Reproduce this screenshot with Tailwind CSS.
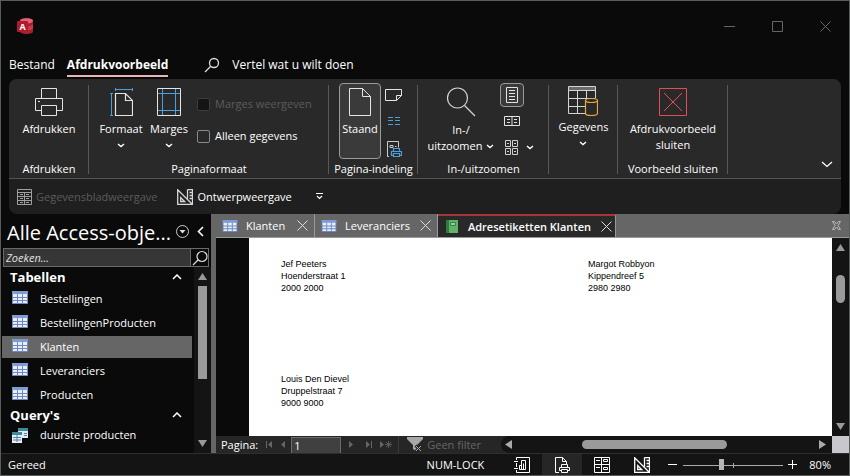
<!DOCTYPE html>
<html lang="nl">
<head>
  <meta charset="UTF-8">
  <meta name="viewport" content="width=device-width, initial-scale=1.0">
  <title>Afdrukvoorbeeld - Access</title>
  <script src="https://cdn.jsdelivr.net/npm/@tailwindcss/browser@4"></script>
</head>
<body class="h-screen overflow-hidden flex flex-col border border-[#5a5c5b] bg-[#0a0a0a] text-white text-[11px] leading-4 font-['Open_Sans','Noto_Sans',sans-serif]">

  <!-- Shared icons -->
  <svg class="hidden">
    <symbol id="icon-table" viewBox="0 0 16 13">
      <rect width="16" height="13" fill="#6f88bd"/>
      <rect width="16" height="3" fill="#7f9bd6"/>
      <path fill="#e6eefc" d="M1 3h4v3H1zM6 3h4v3H6zM11 3h4v3h-4zM1 7h4v2H1zM6 7h4v2H6zM11 7h4v2h-4zM1 10h4v2H1zM6 10h4v2H6zM11 10h4v2h-4z"/>
    </symbol>
    <symbol id="icon-close" viewBox="0 0 11 11">
      <path d="M.5.5l10 10M10.5.5l-10 10" stroke="currentColor" fill="none"/>
    </symbol>
    <symbol id="icon-chevron" viewBox="0 0 8 5">
      <path d="M1 1l3 2.500L7 1" stroke="currentColor" stroke-width="1.4" fill="none"/>
    </symbol>
    <symbol id="icon-design" viewBox="0 0 16 16">
      <path d="M.7.8v14.500h14.600zM3.700 8.500v4h4zM10.500.5h5v15M10.500.5v9M12.500 3.500h3M12.500 6.500h3M12.500 9.500h3" stroke="currentColor" stroke-width="1.3" fill="none"/>
    </symbol>
  </svg>

  <!-- Title bar -->
  <header class="h-[50px] shrink-0 flex items-center justify-between pl-4">
    <svg class="size-4" viewBox="0 0 16 16">
      <path d="M3 2.500C3 1 6 0 9.500 0S16 1 16 2.500v11c0 1.500-3 2.500-6.500 2.500S3 15 3 13.500z" fill="#a8202f"/>
      <ellipse cx="9.500" cy="2.800" rx="6.500" ry="2.600" fill="#e4637a"/>
      <path d="M3 6.500c3 2.500 10 2.500 13 0v4c-3 2.500-10 2.500-13 0z" fill="#c83a4c"/>
      <rect y="3" width="11" height="11" rx="1" fill="#b01a2c"/>
      <text x="5.500" y="12" font-size="9" font-weight="700" text-anchor="middle" fill="#fff">A</text>
    </svg>
    <div class="flex text-[#666]">
      <button aria-label="Minimaliseren" class="w-12 h-8 grid place-items-center"><svg class="size-[11px]" viewBox="0 0 11 11"><path d="M0 5.500h11" stroke="currentColor"/></svg></button>
      <button aria-label="Maximaliseren" class="w-12 h-8 grid place-items-center"><svg class="size-[11px]" viewBox="0 0 11 11"><path d="M.5.5h10v10H.5z" stroke="currentColor" fill="none"/></svg></button>
      <button aria-label="Sluiten" class="w-12 h-8 grid place-items-center"><svg class="size-[11px]"><use href="#icon-close"/></svg></button>
    </div>
  </header>

  <!-- Ribbon tabs -->
  <nav class="h-7 shrink-0 flex items-center pl-2 gap-3 text-[12px]">
    <a href="#" class="h-6 pt-1">Bestand</a>
    <a href="#" class="h-6 pt-1 border-b-2 border-[#e8b4ba] font-bold">Afdrukvoorbeeld</a>
    <button class="ml-6 flex items-center gap-3">
      <svg class="size-4" viewBox="0 0 16 16"><path d="M1 15l5.500-5.500M5.500 6a4.500 4.500 0 1 0 9 0a4.500 4.500 0 1 0-9 0z" stroke="#ddd" stroke-width="1.300" fill="none"/></svg>
      Vertel wat u wilt doen
    </button>
  </nav>

  <!-- Ribbon -->
  <section class="mx-2 shrink-0 rounded-lg overflow-hidden bg-[#1f1f1f]">
    <div class="h-[100px] flex bg-[#292929] border-b border-[#555]">

      <div class="w-20 flex flex-col items-center pt-[9px] relative after:absolute after:right-0 after:top-1.5 after:bottom-1 after:w-px after:bg-[#575757]">
        <button class="flex flex-col items-center">
          <svg class="size-7 mb-[5px]" viewBox="0 0 28 28" fill="none" stroke="#e4e4e4"><path d="M6.500 10V.5h15V10M6.500 22.500h-6v-12h27v12h-6M6.500 17.500h15v10h-15z"/><path d="M3 13.500h2"/></svg>
          Afdrukken
        </button>
        <span class="mt-auto mb-px">Afdrukken</span>
      </div>

      <div class="w-60 flex flex-col items-center pt-[9px] relative after:absolute after:right-0 after:top-1.5 after:bottom-1 after:w-px after:bg-[#575757]">
        <div class="w-full flex pl-2">
          <button class="w-12 flex flex-col items-center">
            <svg class="w-6 h-7 mb-[5px]" viewBox="0 0 24 28" fill="none"><path d="M7 1.500h16M6.500 0v3M23.500 0v3M2.500 6v21M1 5.500h3M1 27.500h3" stroke="#4ba0dc"/><path d="M6.500 5.500h10l7 7v15h-17zM16.500 5.500v7h7" stroke="#e4e4e4" stroke-width="1.200"/></svg>
            Formaat
            <svg class="w-2 h-[5px] mt-1.5"><use href="#icon-chevron"/></svg>
          </button>
          <button class="w-12 flex flex-col items-center">
            <svg class="w-6 h-7 mb-[5px]" viewBox="0 0 24 28" fill="none"><path d="M.5.5h23v27H.5z" stroke="#e4e4e4"/><path d="M5.500 1v26M18.500 1v26M1 5.500h22M1 22.500h22" stroke="#4ba0dc"/></svg>
            Marges
            <svg class="w-2 h-[5px] mt-1.5"><use href="#icon-chevron"/></svg>
          </button>
          <div class="ml-1 mt-2 flex flex-col gap-4">
            <label class="flex items-center gap-[5px] text-[#5c5c5c]"><input type="checkbox" disabled class="appearance-none size-[13px] rounded-xs border border-[#3d3d3d] bg-[#141414]">Marges weergeven</label>
            <label class="flex items-center gap-[5px]"><input type="checkbox" class="appearance-none size-[13px] rounded-xs border border-[#8a8a8a]">Alleen gegevens</label>
          </div>
        </div>
        <span class="mt-auto mb-px">Paginaformaat</span>
      </div>

      <div class="w-[89px] flex flex-col items-center pt-1 relative after:absolute after:right-0 after:top-1.5 after:bottom-1 after:w-px after:bg-[#575757]">
        <div class="w-full flex pl-2.5 gap-1">
          <button class="w-[42px] h-[76px] flex flex-col items-center pt-1 rounded border border-[#9a9a9a] bg-[#3a3a3a]">
            <svg class="w-[22px] h-7 mb-[5px]" viewBox="0 0 22 28" fill="none" stroke="#e4e4e4"><path d="M.5.5h13l8 8v19H.5zM13.500.500v8h8"/></svg>
            Staand
          </button>
          <div class="flex flex-col items-center gap-3 pt-1.5">
            <button aria-label="Liggend"><svg class="w-[17px] h-3" viewBox="0 0 17 12" fill="none" stroke="#e4e4e4"><path d="M.5.5h16v6l-5 5H.5zM11.500 11.500v-5h5"/></svg></button>
            <button aria-label="Kolommen" class="py-1"><svg class="w-3 h-2" viewBox="0 0 12 8"><path d="M0 .5h5M7 .5h5M0 3.500h5M7 3.500h5M0 7.500h5M7 7.500h5" stroke="#4ba0dc"/></svg></button>
            <button aria-label="Pagina-instelling"><svg class="size-4" viewBox="0 0 16 16" fill="none"><path d="M3 15.500H1.500V.500h11v6M4 4.500h3v2H4zM9 5.500h1.500" stroke="#ccc"/><path d="M7.500 10V7.500h6V10M7.500 14.500h-2v-4h10v4h-2M7.500 12.500h6v3h-6z" stroke="#4ba0dc" stroke-width="1.200"/></svg></button>
          </div>
        </div>
        <span class="mt-auto mb-px">Pagina-indeling</span>
      </div>

      <div class="w-[131px] flex flex-col items-center pt-1 relative after:absolute after:right-0 after:top-1.5 after:bottom-1 after:w-px after:bg-[#575757]">
        <div class="w-full flex pl-2 gap-1">
          <button class="w-[70px] flex flex-col items-center pt-1">
            <svg class="size-[30px] mb-[5px]" viewBox="0 0 30 30" fill="none" stroke="#d4d4d4" stroke-width="1.200"><circle cx="11.500" cy="11" r="10"/><path d="M18.500 18.500L29 29"/></svg>
            In-/
            <span class="flex items-center gap-1">uitzoomen <svg class="w-2 h-[5px]"><use href="#icon-chevron"/></svg></span>
          </button>
          <div class="flex flex-col items-start gap-1">
            <button aria-label="Eén pagina" class="w-6 h-6 grid place-items-center rounded border border-[#9a9a9a] bg-[#3a3a3a]"><svg class="w-3 h-4" viewBox="0 0 12 16" fill="none" stroke="#e4e4e4"><path d="M.5.5h11v15H.5zM3 3.500h6M3 6.500h6M3 9.500h6M3 12.500h6"/></svg></button>
            <button aria-label="Twee pagina's" class="w-6 h-5 grid place-items-center"><svg class="w-4 h-2.5" viewBox="0 0 16 10" fill="none" stroke="#e4e4e4"><path d="M.5.5h15v9H.5zM8 .5v9M3 3.500h3M3 6.500h3M10 3.500h3M10 6.500h3"/></svg></button>
            <button aria-label="Meer pagina's" class="h-6 pl-[5px] flex items-center gap-2"><svg class="w-[13px] h-[15px]" viewBox="0 0 13 15" fill="none" stroke="#cfcfcf"><path d="M.5.5h5v6h-5zM7.500.500h5v6h-5zM.5 8.500h5v6h-5zM7.500 8.500h5v6h-5zM2 3.500h2M9 3.500h2M2 11.500h2M9 11.500h2"/></svg><svg class="w-2 h-[5px]"><use href="#icon-chevron"/></svg></button>
          </div>
        </div>
        <span class="mt-auto mb-px">In-/uitzoomen</span>
      </div>

      <div class="w-[69px] flex flex-col items-center pt-[7px] relative after:absolute after:right-0 after:top-1.5 after:bottom-1 after:w-px after:bg-[#575757]">
        <button class="flex flex-col items-center">
          <svg class="w-[30px] h-[30px] mb-[3px]" viewBox="0 0 30 30" fill="none"><path d="M1 1h27v4H1z" fill="#6a6a6a"/><path d="M17 27.500H.5V.5h27V12M.5 4.500h27M.5 12.500h27M.5 20.500H17M9.500 5v22M18.500 5v8" stroke="#d4d4d4"/><path d="M17.500 14.500v13c0 1 2.500 2 6 2s6-1 6-2v-13" fill="#292929" stroke="#e9a93c" stroke-width="1.200"/><ellipse cx="23.500" cy="14.500" rx="6" ry="2" fill="#292929" stroke="#e9a93c" stroke-width="1.200"/></svg>
          Gegevens
          <svg class="w-2 h-[5px] mt-1.5"><use href="#icon-chevron"/></svg>
        </button>
      </div>

      <div class="w-[110px] flex flex-col items-center pt-[9px] relative after:absolute after:right-0 after:top-1.5 after:bottom-1 after:w-px after:bg-[#575757]">
        <button class="flex flex-col items-center">
          <svg class="size-7 mb-[5px]" viewBox="0 0 28 28" fill="none" stroke="#e04f55"><path d="M.5.5h27v27H.5zM5 5l18 18M23 5L5 23"/></svg>
          Afdrukvoorbeeld<br>sluiten
        </button>
        <span class="mt-auto mb-px">Voorbeeld sluiten</span>
      </div>

      <button aria-label="Lint samenvouwen" class="ml-auto mt-auto mb-2.5 mr-2"><svg class="w-3 h-[7px]" viewBox="0 0 12 7"><path d="M1 1l5 4.500L11 1" stroke="#fff" stroke-width="1.300" fill="none"/></svg></button>
    </div>

    <!-- Quick access toolbar -->
    <div class="h-[35px] flex items-center pl-2 gap-5">
      <button disabled class="flex items-center gap-1 text-[#5c5c5c]">
        <svg class="w-[15px] h-4" viewBox="0 0 15 16" fill="none" stroke="#a0a0a0"><path d="M.5.5h14v15H.5zM1 3.500h13M1 7.500h13M1 11.500h13M7.500 3.500v12M3 5.500h3M9 5.500h3M3 9.500h3M9 9.500h3M3 13.500h3M9 13.500h3"/></svg>
        Gegevensbladweergave
      </button>
      <button class="flex items-center gap-1">
        <svg class="size-4 text-[#d8d8d8]"><use href="#icon-design"/></svg>
        Ontwerpweergave
      </button>
      <button aria-label="Werkbalk aanpassen" class="ml-1"><svg class="w-[7px] h-[7px]" viewBox="0 0 7 7"><path d="M0 .5h7M1 3l2.500 2.500L6 3" stroke="#fff" stroke-width="1.200" fill="none"/></svg></button>
    </div>
  </section>

  <main class="flex-1 min-h-0 flex">

    <!-- Navigation pane -->
    <aside class="w-[210px] shrink-0 flex flex-col">
      <div class="h-[34px] shrink-0 flex items-center pl-1.5 pr-[7px]">
        <h1 class="pt-1 text-[20px] leading-7 whitespace-nowrap">Alle Access-obje...</h1>
        <button aria-label="Menu" class="ml-auto"><svg class="size-[13px]" viewBox="0 0 13 13"><circle cx="6.500" cy="6.500" r="6" stroke="#ccc" fill="none"/><path d="M3.500 5h6l-3 3.500z" fill="#ddd"/></svg></button>
        <button aria-label="Deelvenster sluiten" class="ml-2"><svg class="w-[7px] h-[11px]" viewBox="0 0 7 11"><path d="M6 1L1.500 5.500L6 10" stroke="#fff" stroke-width="1.600" fill="none"/></svg></button>
      </div>
      <div class="h-[19px] shrink-0 ml-0.5 mr-[2px] flex border border-[#6a6a6a]">
        <input type="text" aria-label="Zoeken" placeholder="Zoeken..." class="flex-1 min-w-0 pl-0.5 bg-[#363636] text-[11px] italic placeholder:text-[#e0e0e0] outline-none">
        <button aria-label="Zoeken" class="w-[18px] border-l border-[#6a6a6a] grid place-items-center"><svg class="size-4" viewBox="0 0 16 16"><path d="M1 15l5-5M5 6.500a5 5 0 1 0 10 0a5 5 0 1 0-10 0z" stroke="#ddd" stroke-width="1.200" fill="none"/></svg></button>
      </div>
      <div class="flex-1 min-h-0 flex overflow-hidden">
        <div class="flex-1 pl-px">
          <h2 class="h-5 flex items-center justify-between pl-2 pr-2.5 text-[13px] font-bold">Tabellen <svg class="w-2.5 h-1.5" viewBox="0 0 10 6"><path d="M1 5l4-4l4 4" stroke="#fff" stroke-width="1.500" fill="none"/></svg></h2>
          <ul>
            <li class="h-6 flex items-center pl-2.5 gap-3"><svg class="w-4 h-[13px] mb-1"><use href="#icon-table"/></svg>Bestellingen</li>
            <li class="h-6 flex items-center pl-2.5 gap-3"><svg class="w-4 h-[13px] mb-1"><use href="#icon-table"/></svg>BestellingenProducten</li>
            <li class="h-6 flex items-center pl-2.5 gap-3 border-y border-[#0a0a0a] bg-[#666]"><svg class="w-4 h-[13px] mb-1"><use href="#icon-table"/></svg>Klanten</li>
            <li class="h-6 flex items-center pl-2.5 gap-3"><svg class="w-4 h-[13px] mb-1"><use href="#icon-table"/></svg>Leveranciers</li>
            <li class="h-6 flex items-center pl-2.5 gap-3"><svg class="w-4 h-[13px] mb-1"><use href="#icon-table"/></svg>Producten</li>
          </ul>
          <h2 class="h-4 flex items-center justify-between pl-2 pr-2.5 text-[13px] font-bold">Query's <svg class="w-2.5 h-1.5" viewBox="0 0 10 6"><path d="M1 5l4-4l4 4" stroke="#fff" stroke-width="1.500" fill="none"/></svg></h2>
          <ul>
            <li class="h-6 flex items-center pl-2.5 gap-3">
              <svg class="w-4 h-[15px]" viewBox="0 0 16 15"><path d="M6 0h10v10H6z" fill="#dcebf2"/><path d="M6 0h10v3H6z" fill="#3f8a98"/><path d="M0 4h10v11H0z" fill="#e4eff6"/><path d="M0 4h10v3H0z" fill="#3f8a98"/><path d="M1 9.500h8M1 12h8M5 7v7M12 5.500h3M12 7.500h3" stroke="#5a80a8"/></svg>
              duurste producten
            </li>
          </ul>
        </div>
        <div class="w-[17px] ml-0.5 flex flex-col items-center bg-[#141414] py-[6px]">
          <svg class="w-[9px] h-[7px]" viewBox="0 0 9 7"><path d="M4.500 0L9 7H0z" fill="#999"/></svg>
          <div class="mt-1.5 w-[9px] h-[93px] bg-[#9a9a9a]"></div>
          <svg class="w-[9px] h-[7px] mt-auto" viewBox="0 0 9 7"><path d="M4.500 7L9 0H0z" fill="#999"/></svg>
        </div>
      </div>
    </aside>
    <div class="w-[5px] shrink-0 bg-[#666]"></div>

    <!-- Document area -->
    <div class="flex-1 min-w-0 flex flex-col">
      <div class="h-6 shrink-0 flex bg-[#666] border-b border-[#999]">
        <div class="w-[99px] flex items-center pl-1.5 pr-1.5 gap-2 border-r border-[#999]"><svg class="w-4 h-3"><use href="#icon-table"/></svg>Klanten<button aria-label="Klanten sluiten" class="ml-auto"><svg class="size-[11px] text-[#ddd]"><use href="#icon-close"/></svg></button></div>
        <div class="w-[123px] flex items-center pl-1.5 pr-1.5 gap-2 border-r border-[#999]"><svg class="w-4 h-3"><use href="#icon-table"/></svg>Leveranciers<button aria-label="Leveranciers sluiten" class="ml-auto"><svg class="size-[11px] text-[#ddd]"><use href="#icon-close"/></svg></button></div>
        <div class="w-[178px] flex items-center pl-2 pr-1.5 gap-2.5 border-t-2 border-t-[#a4373a] border-r border-r-[#999] bg-[#292929] font-semibold whitespace-nowrap">
          <svg class="w-3 h-[13px] shrink-0" viewBox="0 0 12 13"><path d="M0 0h12v13H0z" fill="#62b36a"/><path d="M0 0h3v13H0z" fill="#2f7d3c"/><path d="M4.500 2.500h5v3h-5z" fill="#8fd494" stroke="#357f40"/></svg>
          Adresetiketten Klanten
          <button aria-label="Adresetiketten sluiten" class="ml-auto"><svg class="size-[11px] text-[#ddd]"><use href="#icon-close"/></svg></button>
        </div>
        <button aria-label="Document sluiten" class="ml-auto mr-2"><svg class="size-[9px]" viewBox="0 0 9 9"><path d="M.5.5h2l2 2.500l2-2.500h2L6 4.500l2.500 4h-2l-2-2.500l-2 2.500h-2L3 4.500z" stroke="#bbb" fill="none"/></svg></button>
      </div>

      <div class="flex-1 min-h-0 flex">
        <div class="flex-1 ml-[33px] pt-5 pl-8 overflow-hidden bg-white text-black text-[9px] leading-3 font-['Liberation_Sans',Arial,sans-serif]">
          <div class="grid grid-cols-[307px_1fr] auto-rows-[115px]">
            <address class="not-italic">Jef Peeters<br>Hoenderstraat 1<br>2000 2000</address>
            <address class="not-italic">Margot Robbyon<br>Kippendreef 5<br>2980 2980</address>
            <address class="not-italic">Louis Den Dievel<br>Druppelstraat 7<br>9000 9000</address>
          </div>
        </div>
        <div class="w-[17px] shrink-0 flex flex-col items-center py-1.5 bg-[#141414]">
          <svg class="w-[9px] h-[7px]" viewBox="0 0 9 7"><path d="M4.500 0L9 7H0z" fill="#999"/></svg>
          <div class="mt-6 w-[9px] h-7 rounded-full bg-[#9a9a9a]"></div>
          <svg class="w-[9px] h-[7px] mt-auto" viewBox="0 0 9 7"><path d="M4.500 7L9 0H0z" fill="#999"/></svg>
        </div>
      </div>

      <!-- Page navigation -->
      <div class="h-[17px] shrink-0 flex items-stretch bg-[#262626] text-[#666]">
        <div class="w-[285px] flex items-center pl-[5px]">
          <label for="page" class="text-white">Pagina:</label>
          <button aria-label="Eerste pagina" class="ml-2"><svg class="w-[7px] h-[7px]" viewBox="0 0 7 7" fill="currentColor"><path d="M0 0h1v7H0zM6 0v7L2 3.500z"/></svg></button>
          <button aria-label="Vorige pagina" class="ml-2 mr-1.5"><svg class="w-1 h-[7px]" viewBox="0 0 4 7" fill="currentColor"><path d="M4 0v7L0 3.500z"/></svg></button>
          <input id="page" type="text" value="1" class="w-[50px] h-4 mt-px pl-0.5 border border-b-0 border-[#6a6a6a] bg-[#404040] text-white outline-none">
          <button aria-label="Volgende pagina" class="ml-2"><svg class="w-1 h-[7px]" viewBox="0 0 4 7" fill="currentColor"><path d="M0 0v7l4-3.500z"/></svg></button>
          <button aria-label="Laatste pagina" class="ml-3"><svg class="w-[7px] h-[7px]" viewBox="0 0 7 7" fill="currentColor"><path d="M6 0h1v7H6zM1 0v7l4-3.500z"/></svg></button>
          <button aria-label="Nieuw" class="ml-2"><svg class="w-3 h-[7px]" viewBox="0 0 12 7"><path d="M0 0v7l4-3.500z" fill="currentColor"/><path d="M8.500 0v7M5 3.500h7M6 1l5 5M11 1L6 6" stroke="currentColor" stroke-width=".8"/></svg></button>
          <button disabled class="ml-1.5 pl-2 h-full border-l border-[#3a3a3a] flex items-center gap-1 whitespace-nowrap"><svg class="w-4 h-[15px] shrink-0" viewBox="0 0 16 15"><path d="M0 0h16v2L10 8v7l-4-3V8L0 2z" fill="#a8a8a8"/><path d="M8.500 8.500l6 6M14.500 8.500l-6 6" stroke="#262626" stroke-width="3"/><path d="M9 9l5 5M14 9l-5 5" stroke="#aaa"/></svg>Geen filter</button>
        </div>
        <div class="flex-1 flex items-center rounded-l-full bg-[#141414] pl-1 pr-1.5">
          <svg class="w-[7px] h-[9px]" viewBox="0 0 7 9"><path d="M0 4.500L7 0v9z" fill="#aaa"/></svg>
          <div class="ml-[70px] w-[145px] h-[9px] rounded-full bg-[#9a9a9a]"></div>
          <svg class="w-[7px] h-[9px] ml-auto" viewBox="0 0 7 9"><path d="M7 4.500L0 0v9z" fill="#aaa"/></svg>
        </div>
        <div class="w-[17px] bg-[#c8c8cc]"></div>
      </div>
    </div>
  </main>

  <!-- Status bar -->
  <footer class="h-[22px] shrink-0 flex items-center pl-[7px] bg-[#141414] border-t border-[#2e2e2e]">
    <span>Gereed</span>
    <span class="ml-auto mr-[18px]">NUM-LOCK</span>
    <div class="flex h-full">
      <button aria-label="Rapportweergave" class="w-10 grid place-items-center"><svg class="size-4" viewBox="0 0 16 16" fill="none" stroke="#fff"><path d="M2.500 3V.500h13v15h-13V13M2.500 6v4M0 4.500h4M0 11.500h4M5.500 12.500v-4h2v4zM7.500 12.500v-9h4v9zM9.500 12.500v-6"/></svg></button>
      <button aria-label="Afdrukvoorbeeld" class="w-10 grid place-items-center bg-[#262626]"><svg class="size-4" viewBox="0 0 16 16" fill="none" stroke="#fff"><path d="M5 15.500H1.500V.500h7l4 4V7M8.500.500v4h4M7.500 10V7.500h6V10M7.500 13.500h-2v-3h10v3h-2M7.500 12.500h6v3h-6z"/></svg></button>
      <button aria-label="Indelingsweergave" class="w-10 grid place-items-center"><svg class="size-4" viewBox="0 0 16 16" fill="none" stroke="#fff"><path d="M.5.5h15v15H.5zM7.500.500v15M.5 7.500h15M2 3.500h4M9.500 2.500h4v2h-4zM2 10.500h4M9.500 10.500h4v2h-4z"/></svg></button>
      <button aria-label="Ontwerpweergave" class="w-10 grid place-items-center"><svg class="size-4"><use href="#icon-design"/></svg></button>
    </div>
    <button aria-label="Uitzoomen" class="ml-1.5"><svg class="size-[9px]" viewBox="0 0 9 9"><path d="M0 4.500h9" stroke="#fff"/></svg></button>
    <input type="range" aria-label="Zoomniveau" value="38" class="ml-1.5 w-[100px] h-3 appearance-none bg-[linear-gradient(#aaa,#aaa),linear-gradient(#aaa,#aaa)] bg-no-repeat bg-[position:0_6px,50px_4px] bg-[size:100%_1px,1px_5px] [&::-webkit-slider-thumb]:appearance-none [&::-webkit-slider-thumb]:w-[5px] [&::-webkit-slider-thumb]:h-[11px] [&::-webkit-slider-thumb]:bg-[#b4b4b4]">
    <button aria-label="Inzoomen" class="ml-[5px]"><svg class="size-[9px]" viewBox="0 0 9 9"><path d="M0 4.500h9M4.500 0v9" stroke="#fff"/></svg></button>
    <span class="ml-3 mr-[18px]">80%</span>
  </footer>
</body>
</html>
